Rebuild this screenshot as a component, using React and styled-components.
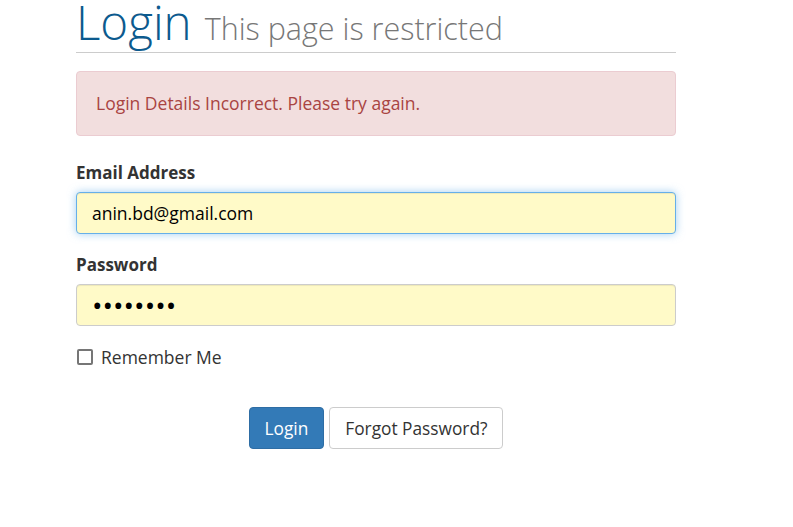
import React from 'react';
import styled, { createGlobalStyle } from 'styled-components';

/* ****************** */
/* Styled Components */
/* ****************** */
const GlobalStyle = createGlobalStyle`
    body {
        margin: 0;
        background: #fff;
        font-family: "Open Sans", "Liberation Sans", sans-serif;
        color: #333;
    }
`;

const Page = styled.div`
    width: 600px;
    padding: 0 0 0 76px;
`;

const Heading = styled.h1`
    margin: 0;
    padding-bottom: 4px;
    border-bottom: 1px solid #ccc;
    display: flex;
    align-items: baseline;
    gap: 13px;
    font-family: "Open Sans", Lato, sans-serif;
    font-weight: 300;
    font-size: 47.5px;
    line-height: 44px;
    height: 48px;
    color: #0c5a8e;
    white-space: nowrap;
`;

const SubTitle = styled.small`
    font-size: 30.5px;
    color: #777;
    font-weight: 300;
`;

const Alert = styled.div`
    margin-top: 18px;
    padding: 20px 19px;
    background: #f2dede;
    border: 1px solid #ebccd1;
    border-radius: 4px;
    color: #a94442;
    font-size: 17.5px;
    line-height: 23px;
`;

const Form = styled.form`
    margin-top: 26px;
    display: flex;
    flex-direction: column;
`;

const Label = styled.label`
    font-weight: 700;
    font-size: 17px;
    line-height: 22px;
    margin-bottom: 8px;
`;

const Input = styled.input`
    box-sizing: border-box;
    width: 100%;
    height: 42px;
    padding: 0 15px;
    font-family: "Open Sans", "Liberation Sans", sans-serif;
    font-size: ${p => (p.type === 'password' ? '28px' : '17.5px')};
    color: #000;
    background: #fffac8;
    border: 1px solid ${p => (p.$focus ? '#66afe9' : '#ccc')};
    border-radius: 4px;
    box-shadow: ${p => (p.$focus ? 'inset 0 1px 1px rgba(0,0,0,.075), 0 0 8px rgba(102,175,233,.6)' : 'inset 0 1px 1px rgba(0,0,0,.075)')};
    outline: none;
    margin-bottom: ${p => p.$gap}px;
`;

const CheckRow = styled.label`
    display: flex;
    align-items: center;
    gap: 8px;
    font-size: 17.5px;
    line-height: 22px;
`;

const Box = styled.span`
    box-sizing: border-box;
    width: 16px;
    height: 16px;
    border: 2px solid #767676;
    border-radius: 2px;
    margin-left: 1px;
`;

const Actions = styled.div`
    display: flex;
    justify-content: center;
    gap: 5px;
    margin-top: 39px;
`;

const Button = styled.button`
    height: 42px;
    padding: 0 15px;
    font-family: "Open Sans", "Liberation Sans", sans-serif;
    font-size: 17.3px;
    border-radius: 4px;
    border: 1px solid ${p => (p.$primary ? '#2e6da4' : '#ccc')};
    background: ${p => (p.$primary ? '#337ab7' : '#fff')};
    color: ${p => (p.$primary ? '#fff' : '#333')};
`;

/* ****************** */
/*     Component      */
/* ****************** */
export default function App() {
    return (
        <Page>
            <GlobalStyle />
            <Heading>
                Login <SubTitle>This page is restricted</SubTitle>
            </Heading>
            <Alert>Login Details Incorrect. Please try again.</Alert>
            <Form onSubmit={e => e.preventDefault()}>
                <Label>Email Address</Label>
                <Input $focus $gap={20} defaultValue="anin.bd@gmail.com" />
                <Label>Password</Label>
                <Input type="password" $gap={20} defaultValue="password" />
                <CheckRow>
                    <Box />
                    Remember Me
                </CheckRow>
                <Actions>
                    <Button $primary>Login</Button>
                    <Button>Forgot Password?</Button>
                </Actions>
            </Form>
        </Page>
    );
}
